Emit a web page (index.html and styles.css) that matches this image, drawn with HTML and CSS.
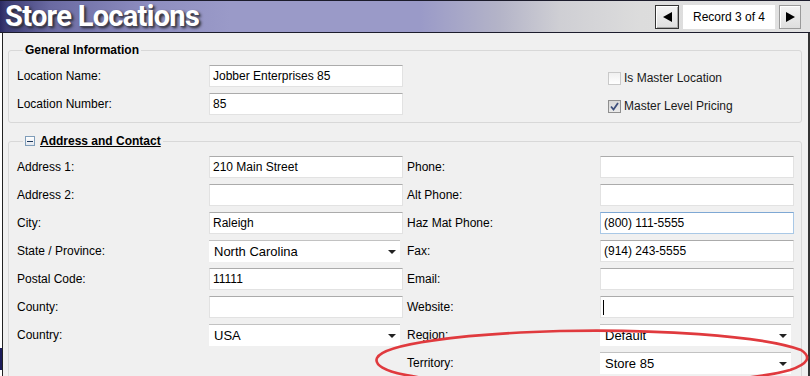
FILE: index.html
```html
<!doctype html>
<html lang="en">
<head>
	<meta charset="UTF-8"/>
	<title>Store Locations</title>
	<link rel="stylesheet" href="styles.css">
</head>
<body>
	<div class="app">
		<div class="titlebar">
			<h1>Store Locations</h1>
			<div class="nav">
				<a href="#" class="navbtn prev"><svg width="9" height="10" viewBox="0 0 9 10"><path d="M0 5 L9 0 L9 10 Z" fill="#000"/></svg></a>
				<span class="record">Record 3 of 4</span>
				<a href="#" class="navbtn next"><svg width="9" height="10" viewBox="0 0 9 10"><path d="M9 5 L0 0 L0 10 Z" fill="#000"/></svg></a>
			</div>
		</div>

		<div class="content">
			<fieldset class="group general">
				<legend>General Information</legend>
				<div class="grid">
					<label>Location Name:</label>
					<div class="field">Jobber Enterprises 85</div>
					<label class="check"><span class="box"></span>Is Master Location</label>

					<label>Location Number:</label>
					<div class="field">85</div>
					<label class="check"><span class="box on"><svg width="11" height="11" viewBox="0 0 11 11"><path d="M2 5.5 L4.5 8.5 L9 2" fill="none" stroke="#3d4f7c" stroke-width="1.8"/></svg></span>Master Level Pricing</label>
				</div>
			</fieldset>

			<fieldset class="group address">
				<legend><span class="toggle"></span><u>Address and Contact</u></legend>
				<div class="grid">
					<label>Address 1:</label>
					<div class="field">210 Main Street</div>
					<label class="right">Phone:</label>
					<div class="field"></div>

					<label>Address 2:</label>
					<div class="field"></div>
					<label class="right">Alt Phone:</label>
					<div class="field"></div>

					<label>City:</label>
					<div class="field">Raleigh</div>
					<label class="right">Haz Mat Phone:</label>
					<div class="field hover">(800) 111-5555</div>

					<label>State / Province:</label>
					<div class="select">North Carolina<span class="arrow"></span></div>
					<label class="right">Fax:</label>
					<div class="field">(914) 243-5555</div>

					<label>Postal Code:</label>
					<div class="field">11111</div>
					<label class="right">Email:</label>
					<div class="field"></div>

					<label>County:</label>
					<div class="field"></div>
					<label class="right">Website:</label>
					<div class="field"><span class="caret"></span></div>

					<label>Country:</label>
					<div class="select">USA<span class="arrow"></span></div>
					<label class="right">Region:</label>
					<div class="select">Default<span class="arrow"></span></div>

					<label class="right territory">Territory:</label>
					<div class="select">Store 85<span class="arrow"></span></div>
				</div>
			</fieldset>
		</div>
		<span class="blip"></span>

		<!-- red markup circled by hand -->
		<svg class="markup" width="810" height="376" viewBox="0 0 810 376">
			<path d="M377 358 C384 344 460 334 560 331 C650 329 760 335 801 350 C812 357 808 364 790 370 C740 384 600 388 500 384 C420 381 371 372 377 358 Z" fill="none" stroke="#e03a3e" stroke-width="2.6"/>
		</svg>
	</div>
</body>
</html>
```

FILE: styles.css
```css
*				{ padding:0; margin:0; box-sizing:border-box; }
body			{ background:#fff; font-family:"Liberation Sans", Arial, sans-serif; font-size:12px; color:#000; }
.app			{ position:relative; width:810px; height:376px; overflow:hidden; }

.titlebar		{ height:33px; display:flex; align-items:center; justify-content:space-between; border-top:1px solid #1c1c2c; border-bottom:1px solid #1c1c2c;
				  background:linear-gradient(to right, #2a2a62 0, #3c3c74 6px, #6a6aa2 50px, #8e8ec0 150px, #9a9ac8 230px, #9a9ac8 420px, #b4b4c8 500px, #cfcfd4 560px, #dcdcdc 640px, #e2e2e2 100%); }
.titlebar h1	{ font-family:Roboto, "Liberation Sans", sans-serif; font-size:29px; font-weight:bold; letter-spacing:-0.7px; line-height:31px; color:#fff; padding-left:5px;
				  text-shadow:1px 1px 0 #44445a, 2px 2px 3px #222; }
.nav			{ display:flex; align-items:center; gap:4px; margin-right:9px; }
.navbtn			{ width:24px; height:24px; display:flex; align-items:center; justify-content:center; background:linear-gradient(#f4f4f4, #dedede); text-decoration:none; }
.navbtn.prev	{ border:1px solid #333; box-shadow:inset 1px 1px 0 #fff, inset -1px -1px 0 #a8a8a8; }
.navbtn.next	{ width:22px; border:1px solid #9a9a9a; box-shadow:inset 1px 1px 0 #fff; }
.record			{ width:92px; height:24px; line-height:24px; text-align:center; background:#fff; font-size:12px; }

.content		{ height:343px; margin-left:2px; border-left:1px solid #222; border-right:2px solid #333; background:#f0f0f0; padding-top:10px; }
.group			{ margin:0 6px 0 5px; border:1px solid #d8d8d8; border-radius:3px; padding:8px 7px 7px 8px; }
.group legend	{ margin-left:6px; padding:0 2px; font-weight:bold; line-height:14px; display:flex; align-items:center; gap:5px; }
.address		{ margin-top:11px; padding-top:8px; }
.address u		{ text-underline-offset:1px; }
.toggle			{ width:10px; height:10px; border:1px solid #7f9db9; background:linear-gradient(#fff, #e4e8ef); display:flex; align-items:center; justify-content:center; }
.toggle:after	{ content:""; width:6px; height:1px; background:#1e395b; }

.grid			{ display:grid; grid-template-columns:192px 194px 197px 194px; grid-auto-rows:22px; row-gap:6px; align-items:center; }
.grid label		{ line-height:22px; }
.grid .right	{ padding-left:4px; }
.territory		{ grid-column:3; }
.check			{ grid-column:4; display:flex; align-items:center; gap:3px; padding-left:8px; margin-top:4px; color:#1a1a1a; }
.box			{ width:13px; height:13px; border:1px solid #c9c9c9; background:linear-gradient(#f0f0f0, #fff); display:flex; align-items:center; justify-content:center; }
.box.on			{ border-color:#8f8f8f; background:linear-gradient(#d8d8d8, #eaeaea); }

.field			{ height:22px; line-height:20px; padding-left:3px; background:#fff; border:1px solid #e2e2e2; border-top-color:#ababab; }
.field.hover	{ border-color:#a9c8e6; border-top-color:#7ea8d4; }
.caret			{ display:inline-block; width:1px; height:15px; background:#000; vertical-align:middle; margin-left:-1px; }
.select			{ width:191px; height:22px; line-height:21px; padding:0 4px 0 5px; font-size:13px; background:#fff; border-top:1px solid #c2c2c2; display:flex; align-items:center; justify-content:space-between; }
.select .arrow	{ width:0; height:0; border-left:4px solid transparent; border-right:4px solid transparent; border-top:4px solid #222; }

.blip			{ position:absolute; left:0; top:348px; width:2px; height:22px; background:#1c1c5a; }
.markup			{ position:absolute; top:0; left:0; pointer-events:none; }
```
